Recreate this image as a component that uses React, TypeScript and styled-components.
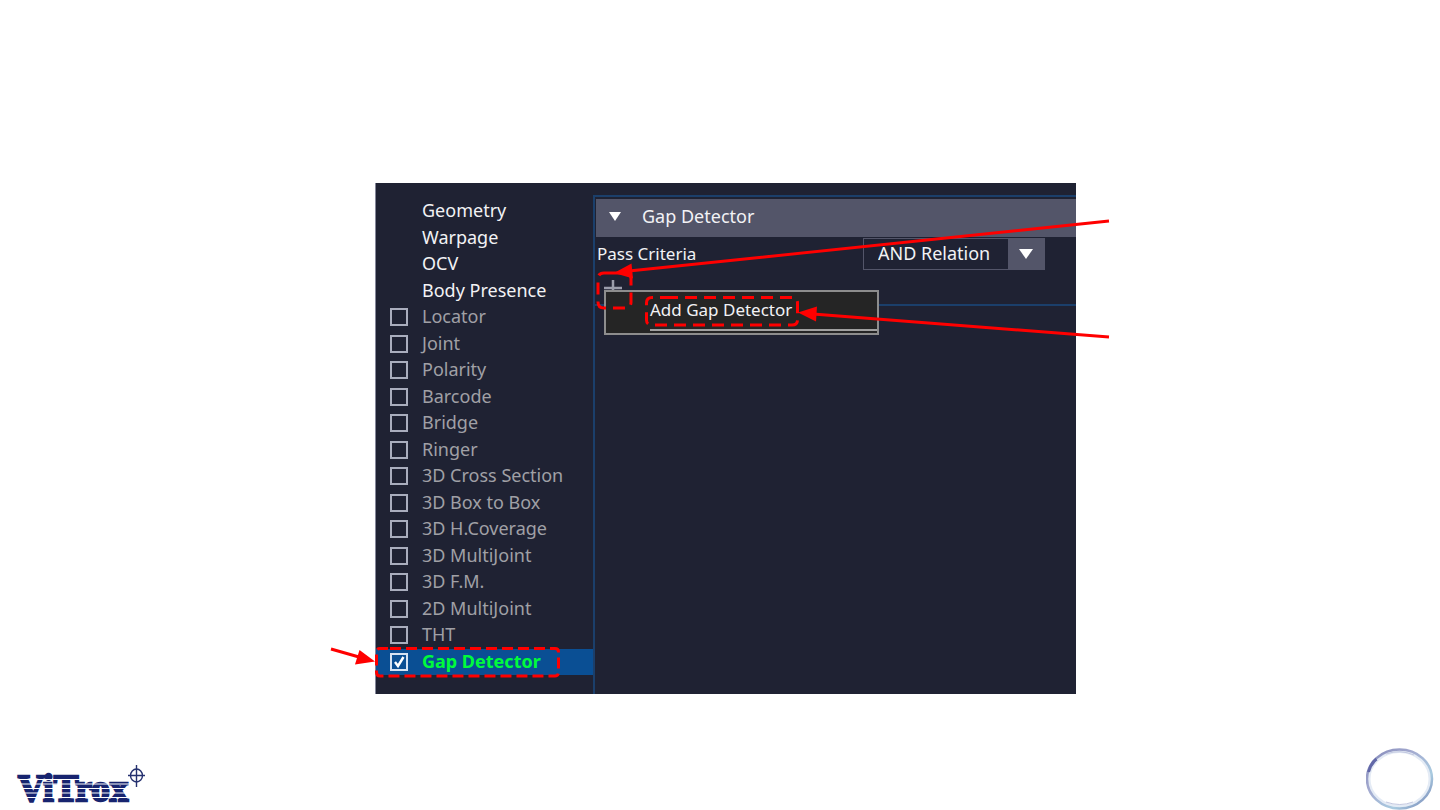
import React from "react";
import styled, { createGlobalStyle } from "styled-components";

const GlobalStyle = createGlobalStyle`
  *, *::before, *::after { box-sizing: border-box; }
  body { margin: 0; background: #ffffff; }
  body, button, select, input {
    font-family: "Noto Sans", "Open Sans", sans-serif;
    font-size: 18px;
  }
`;

const Slide = styled.div`
  min-height: 100vh;
  display: flex;
  flex-direction: column;
  justify-content: space-between;
  overflow: hidden;
`;

const Stage = styled.main`
  display: grid;
  grid-template-columns: 375fr 701fr 364fr;
  padding-top: 183px;
`;

const Figure = styled.div`
  grid-column: 2;
  position: relative;
`;

const AppWindow = styled.section`
  display: grid;
  grid-template-columns: 217px 1fr;
  background: #1f2233;
  color: #f2f2f5;
  border-left: 1px solid #85879a;
`;

const Sidebar = styled.ul`
  list-style: none;
  margin: 0;
  padding: 15px 0 19px;
  height: 511px;
  display: grid;
  grid-auto-rows: 1fr;
`;

type Tone = "plain" | "muted" | "active";

const Row = styled.li<{ $tone: Tone }>`
  display: grid;
  grid-template-columns: 18px 1fr;
  column-gap: 14px;
  align-items: center;
  padding-left: 14px;
  line-height: 24px;
  min-height: 0;
  white-space: nowrap;
  color: ${(p) => ({ plain: "#f2f2f5", muted: "#a0a0a6", active: "#00fb3c" })[p.$tone]};
  background: ${(p) => (p.$tone === "active" ? "#0a4f94" : "transparent")};
  font-weight: ${(p) => (p.$tone === "active" ? 700 : 400)};
`;

const RowLabel = styled.label`
  grid-column: 2;
  padding-bottom: 2px;
`;

const CheckCell = styled.span`
  position: relative;
  display: flex;
`;

const Checkbox = styled.input`
  appearance: none;
  margin: 0;
  width: 18px;
  height: 18px;
  border: 2px solid #a9adbd;
  &:checked { border-color: #d5e2f2; }
`;

const CheckMark = styled.svg`
  position: absolute;
  inset: 0;
  pointer-events: none;
`;

const Content = styled.div`
  border-left: 2px solid #1b3f6b;
  margin-top: 12px;
`;

const Group = styled.section`
  border-top: 2px solid #1b3f6b;
  border-bottom: 2px solid #1b3f6b;
  padding: 2px 0 0 1px;
  height: 111px;
`;

const GroupHeader = styled.button`
  display: flex;
  align-items: center;
  gap: 21px;
  width: 100%;
  height: 38px;
  padding: 0 0 4px 13px;
  border: 0;
  background: #535569;
  color: #f2f2f5;
  text-align: left;
`;

const Criteria = styled.div`
  display: grid;
  grid-template-columns: 266px 182px;
  align-items: center;
  height: 34px;
  padding-left: 1px;
`;

const CriteriaLabel = styled.label`
  font-size: 17px;
  padding-bottom: 2px;
`;

const SelectBox = styled.div`
  display: grid;
  grid-template-columns: 1fr 36px;
  height: 32px;
  border: 1px solid #535569;
`;

const Select = styled.select`
  grid-area: 1 / 1 / 2 / 3;
  appearance: none;
  border: 0;
  background: transparent;
  color: #f2f2f5;
  padding: 0 40px 2px 14px;
  white-space: nowrap;
`;

const SelectArrow = styled.span`
  grid-area: 1 / 2;
  display: flex;
  align-items: center;
  justify-content: center;
  background: #535569;
  pointer-events: none;
`;

const AddButton = styled.button`
  display: block;
  margin: 9px 0 0 8px;
  padding: 0;
  border: 0;
  background: none;
  line-height: 0;
`;

const Menu = styled.div`
  position: absolute;
  left: 229px;
  top: 107px;
  width: 275px;
  height: 45px;
  padding-left: 44px;
  border: 2px solid #8d8d8d;
  background: #252525;
`;

const MenuItem = styled.button`
  display: block;
  width: 100%;
  height: 39px;
  padding: 0 0 2px;
  border: 0;
  border-bottom: 2px solid #a0a0a0;
  background: none;
  color: #f2f2f5;
  font-size: 17px;
  line-height: 34px;
  text-align: left;
`;

const Annotations = styled.svg`
  position: absolute;
  left: 0;
  top: 0;
  overflow: visible;
  pointer-events: none;
`;

const Footer = styled.footer`
  display: flex;
  justify-content: space-between;
  align-items: flex-end;
  padding: 0 6px 0 14px;
`;

const items: { name: string; tone: Tone }[] = [
  ...["Geometry", "Warpage", "OCV", "Body Presence"].map((name) => ({ name, tone: "plain" as Tone })),
  ...[
    "Locator", "Joint", "Polarity", "Barcode", "Bridge", "Ringer", "3D Cross Section",
    "3D Box to Box", "3D H.Coverage", "3D MultiJoint", "3D F.M.", "2D MultiJoint", "THT",
  ].map((name) => ({ name, tone: "muted" as Tone })),
  { name: "Gap Detector", tone: "active" },
];

function ItemRow({ name, tone }: { name: string; tone: Tone }) {
  if (tone === "plain") {
    return (
      <Row $tone={tone}>
        <RowLabel as="span">{name}</RowLabel>
      </Row>
    );
  }
  const id = "item-" + name.replace(/\W+/g, "-").toLowerCase();
  return (
    <Row $tone={tone}>
      <CheckCell>
        <Checkbox type="checkbox" id={id} defaultChecked={tone === "active"} />
        {tone === "active" && (
          <CheckMark width="18" height="18" viewBox="0 0 18 18">
            <path d="M5 9l3 4 5.500-9" fill="none" stroke="#fff" strokeWidth="2.400" />
          </CheckMark>
        )}
      </CheckCell>
      <RowLabel htmlFor={id}>{name}</RowLabel>
    </Row>
  );
}

function Callouts() {
  return (
    <Annotations width="701" height="511" viewBox="0 0 701 511" aria-hidden="true">
      <g fill="none" stroke="#ff0000" strokeWidth="3">
        <path
          strokeDasharray="11 5"
          d="M15 465.500H180Q183.500 465.500 183.500 469V489Q183.500 493 180 493H5Q1.500 493 1.500 489V469Q1.500 465.500 5 465.500H15"
        />
        <path
          strokeDasharray="12 7"
          d="M235 90H250Q256 90 256 96V119Q256 125 250 125H229Q223 125 223 119V96Q223 90 229 90H235"
        />
        <path
          strokeDasharray="12 7"
          d="M291 114.500H417Q422.500 114.500 422.500 120V137Q422.500 142 417 142H277Q271.500 142 271.500 137V120Q271.500 114.500 277 114.500H291"
        />
      </g>
      <path d="M734 38L254 88M734 154L438 131M-44 466L-16 474" stroke="#ff0000" strokeWidth="3" />
      <g fill="#ff0000">
        <path d="M239 90L256.500 80.500L258 95.500Z" />
        <path d="M423 129.500L442 123.500L441 138.500Z" />
        <path d="M0 478.500L-15.500 467L-20 481.500Z" />
      </g>
    </Annotations>
  );
}

function Logo() {
  return (
    <svg width="134" height="50" viewBox="0 0 134 50" role="img" aria-label="ViTrox">
      <text x="4" y="41" fontFamily="Liberation Serif, serif" fontWeight="700" fontSize="37" fill="#17246f" stroke="#17246f" strokeWidth="2.400">
        ViTrox
      </text>
      <path d="M0 19.500H116M0 24H116M0 28.500H116M0 33H116M0 37.500H116" stroke="#fff" strokeWidth="1" />
      <g fill="none" stroke="#25316f" strokeWidth="1.400">
        <ellipse cx="122.500" cy="15.500" rx="6" ry="6.500" />
        <path d="M114 15.500H131M122.500 5V27" />
      </g>
    </svg>
  );
}

function Ring() {
  return (
    <svg width="68" height="62" viewBox="0 0 68 62" aria-hidden="true">
      <defs>
        <linearGradient id="ring" x1="0" y1="0" x2="1" y2="1">
          <stop offset="0" stopColor="#8187b8" />
          <stop offset="0.350" stopColor="#a3a9cf" />
          <stop offset="0.700" stopColor="#a9cbe0" />
          <stop offset="1" stopColor="#7381b3" />
        </linearGradient>
      </defs>
      <ellipse cx="33.500" cy="31" rx="31" ry="28" fill="none" stroke="#e4ebf5" strokeWidth="4" />
      <ellipse cx="33.500" cy="31" rx="32.500" ry="29.500" fill="none" stroke="url(#ring)" strokeWidth="2.500" />
      <path d="M2.500 24Q4.500 16 10.500 11" fill="none" stroke="#6268a8" strokeWidth="3" />
      <path d="M20 6Q34 1 48 7M20 54Q34 59 47 54" fill="none" stroke="#c3c8e0" strokeWidth="1" />
    </svg>
  );
}

export default function App() {
  return (
    <Slide>
      <GlobalStyle />
      <Stage>
        <Figure>
          <AppWindow>
            <Sidebar>
              {items.map((item) => (
                <ItemRow key={item.name} {...item} />
              ))}
            </Sidebar>
            <Content>
              <Group>
                <GroupHeader type="button">
                  <svg width="12" height="10" viewBox="0 0 12 10">
                    <path d="M0 1H12L6 10Z" fill="#fff" />
                  </svg>
                  Gap Detector
                </GroupHeader>
                <Criteria>
                  <CriteriaLabel htmlFor="criteria">Pass Criteria</CriteriaLabel>
                  <SelectBox>
                    <Select id="criteria" defaultValue="and">
                      <option value="and">AND Relation</option>
                    </Select>
                    <SelectArrow>
                      <svg width="14" height="10" viewBox="0 0 14 10">
                        <path d="M0 0H14L7 10Z" fill="#fff" />
                      </svg>
                    </SelectArrow>
                  </SelectBox>
                </Criteria>
                <AddButton type="button" aria-label="Add">
                  <svg width="18" height="18" viewBox="0 0 18 18">
                    <path d="M9 0V18M0 8H18" stroke="#9a9dac" strokeWidth="2.500" />
                  </svg>
                </AddButton>
              </Group>
            </Content>
          </AppWindow>
          <Menu>
            <MenuItem type="button">Add Gap Detector</MenuItem>
          </Menu>
          <Callouts />
        </Figure>
      </Stage>
      <Footer>
        <Logo />
        <Ring />
      </Footer>
    </Slide>
  );
}
